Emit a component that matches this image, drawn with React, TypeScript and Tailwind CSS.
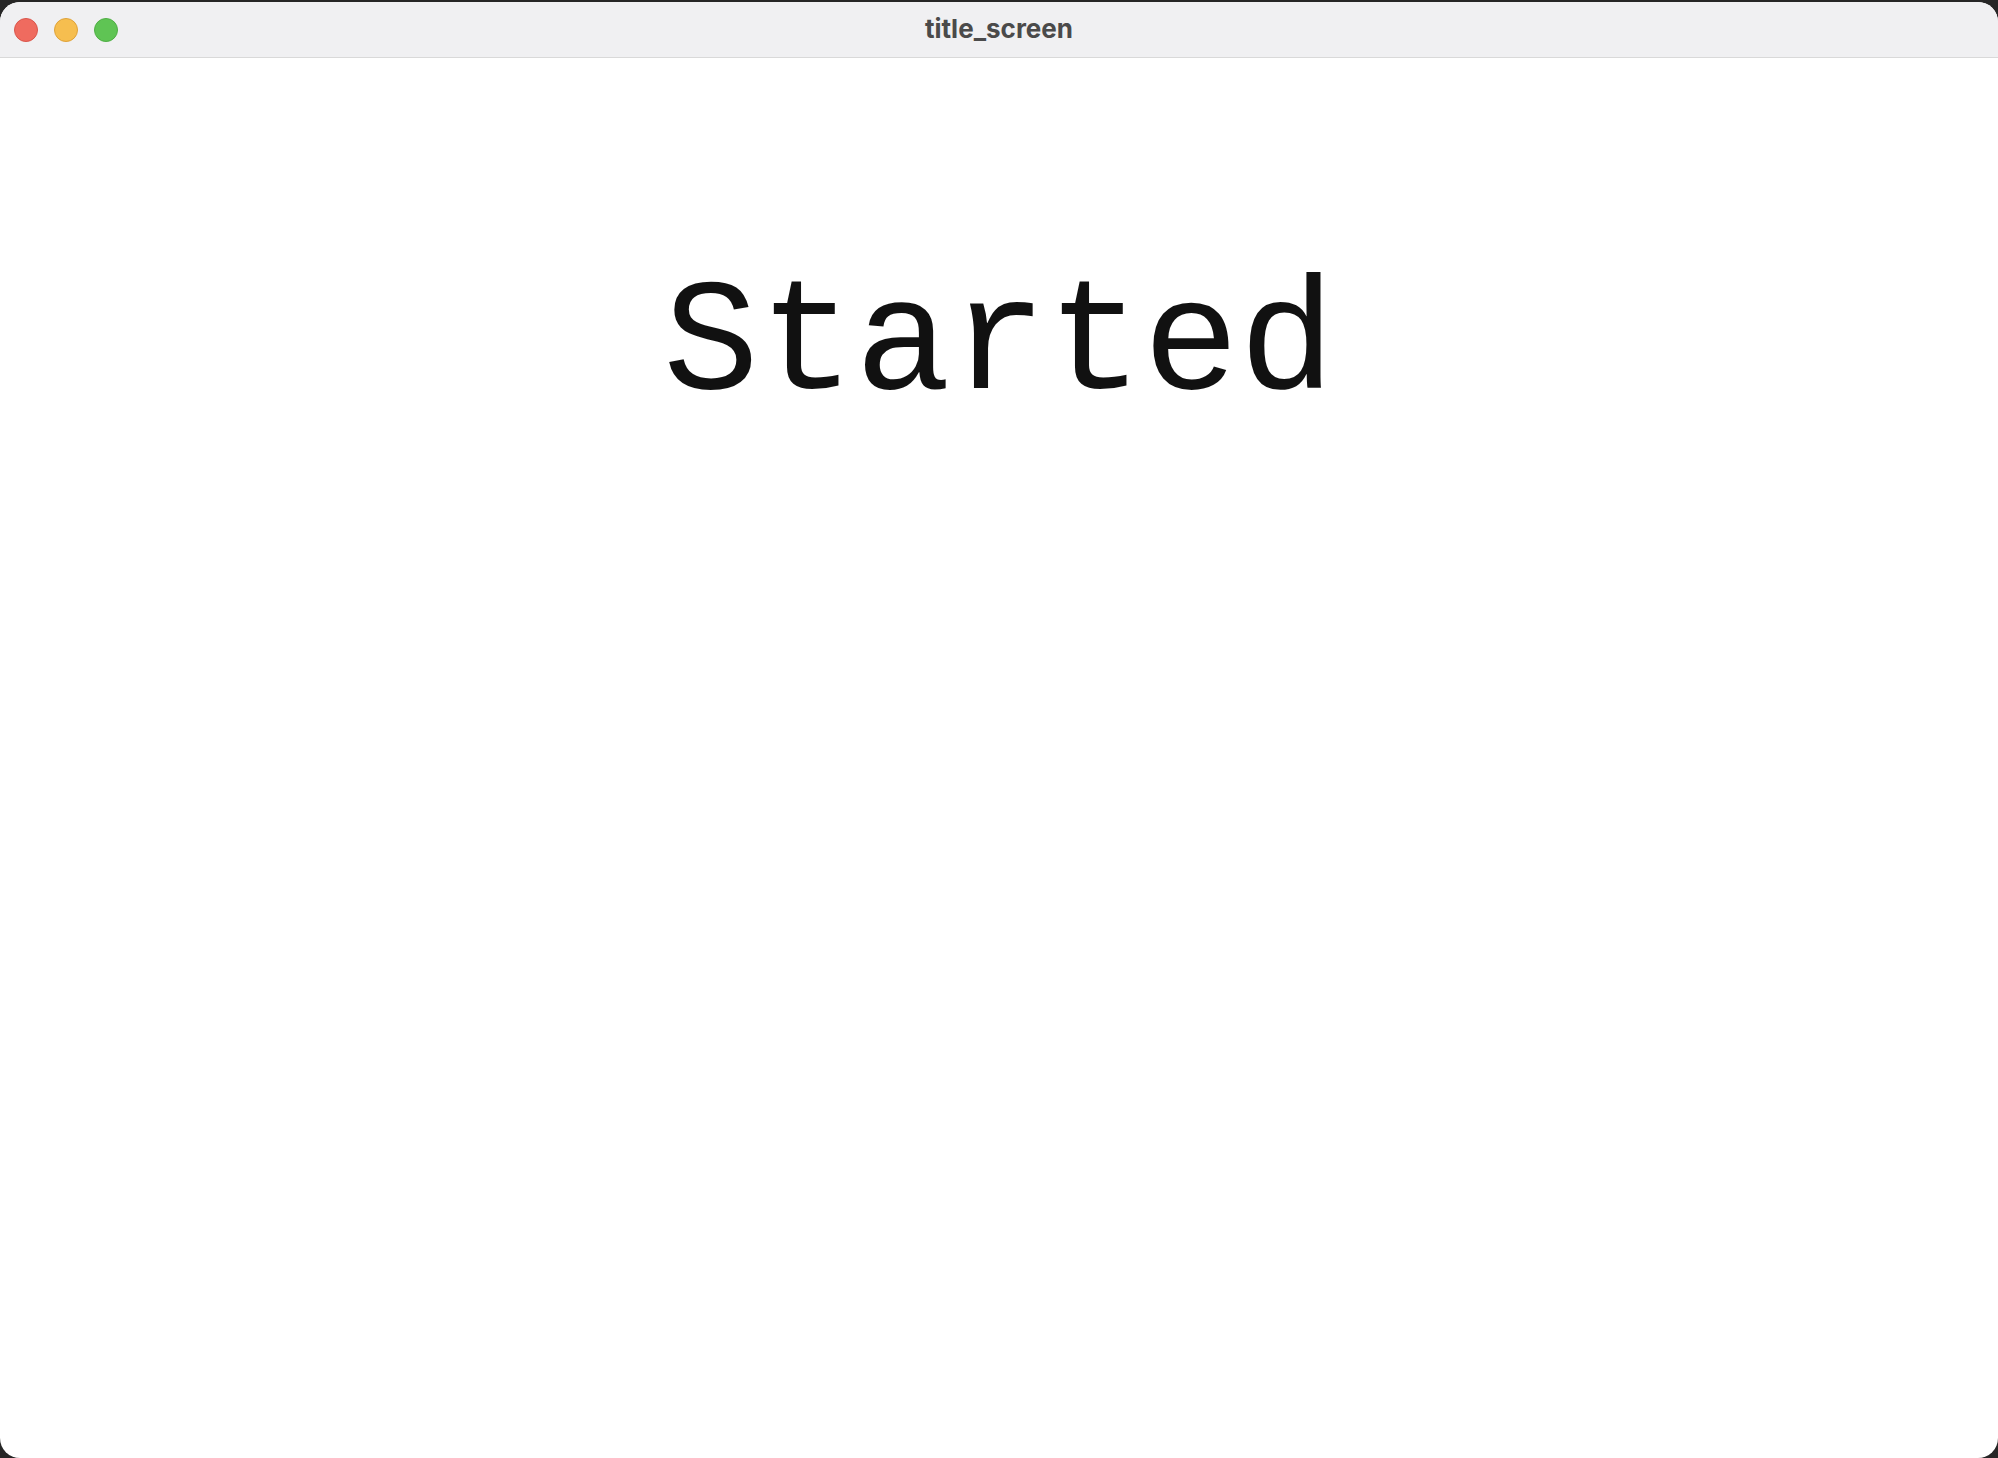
export default function App() {
  return (
    <div className="h-screen w-full bg-[#262626] pt-[2px]">
      <div className="flex h-[1456px] flex-col overflow-hidden rounded-[20px] bg-white">
        <div className="relative flex h-[56px] shrink-0 items-center justify-center border-b border-[#d9d9d9] bg-[#f0f0f2]">
          <div className="absolute left-[14px] top-[16px] flex gap-[16px]">
            <span className="h-[24px] w-[24px] rounded-full border border-[#d9564c] bg-[#ef6b5f]" />
            <span className="h-[24px] w-[24px] rounded-full border border-[#dea23a] bg-[#f6be4f]" />
            <span className="h-[24px] w-[24px] rounded-full border border-[#4fae45] bg-[#5fc454]" />
          </div>
          <span className="-mt-[3px] text-[26px] font-bold text-[#4a4a4a] [font-family:Inter,'Liberation_Sans',sans-serif]">
            title_screen
          </span>
        </div>
        <div className="flex flex-1 justify-center pt-[208px]">
          <span className="text-[160px] leading-none text-[#111] [font-family:'Liberation_Mono',monospace]">
            Started
          </span>
        </div>
      </div>
    </div>
  )
}
